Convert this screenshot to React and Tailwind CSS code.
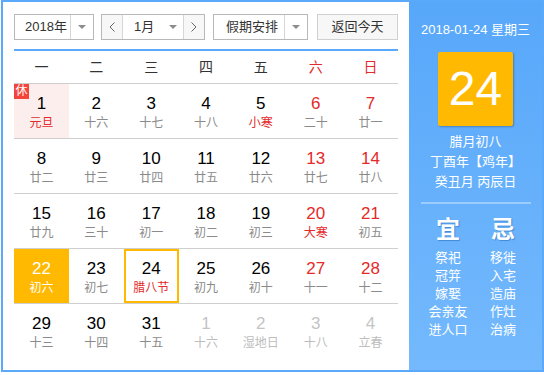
import React from "react";

const FONT = { fontFamily: '"Liberation Sans", Arial, "Noto Sans CJK SC", sans-serif' };

const rows = [
  [
    { d: "1", l: "元旦", lr: true, holiday: true, rest: true },
    { d: "2", l: "十六" },
    { d: "3", l: "十七" },
    { d: "4", l: "十八" },
    { d: "5", l: "小寒", lr: true },
    { d: "6", l: "二十", wk: true },
    { d: "7", l: "廿一", wk: true },
  ],
  [
    { d: "8", l: "廿二" },
    { d: "9", l: "廿三" },
    { d: "10", l: "廿四" },
    { d: "11", l: "廿五" },
    { d: "12", l: "廿六" },
    { d: "13", l: "廿七", wk: true },
    { d: "14", l: "廿八", wk: true },
  ],
  [
    { d: "15", l: "廿九" },
    { d: "16", l: "三十" },
    { d: "17", l: "初一" },
    { d: "18", l: "初二" },
    { d: "19", l: "初三" },
    { d: "20", l: "大寒", wk: true, lr: true },
    { d: "21", l: "初五", wk: true },
  ],
  [
    { d: "22", l: "初六", today: true },
    { d: "23", l: "初七" },
    { d: "24", l: "腊八节", lr: true, sel: true },
    { d: "25", l: "初九" },
    { d: "26", l: "初十" },
    { d: "27", l: "十一", wk: true },
    { d: "28", l: "十二", wk: true },
  ],
  [
    { d: "29", l: "十三" },
    { d: "30", l: "十四" },
    { d: "31", l: "十五" },
    { d: "1", l: "十六", other: true },
    { d: "2", l: "湿地日", other: true },
    { d: "3", l: "十八", other: true },
    { d: "4", l: "立春", other: true },
  ],
];

function Tri() {
  return (
    <svg width="8" height="4" viewBox="0 0 8 4" className="block">
      <path d="M0 0 L8 0 L4 4 Z" fill="#8c8c8c" />
    </svg>
  );
}

function Chev({ dir }) {
  return (
    <svg width="6" height="10" viewBox="0 0 6 10" className="block">
      <path
        d={dir === "l" ? "M5.5 0.5 L1 5 L5.5 9.5" : "M0.5 0.5 L5 5 L0.5 9.5"}
        fill="none"
        stroke="#666"
        strokeWidth="1"
      />
    </svg>
  );
}

function Cell({ c }) {
  let numColor = "text-black";
  let lunColor = "text-[#8a8a8a]";
  if (c.wk) numColor = "text-[#e42a2a]";
  if (c.lr) lunColor = "text-[#e42a2a]";
  if (c.other) {
    numColor = "text-[#c4c4c4]";
    lunColor = "text-[#bdbdbd]";
  }
  if (c.today) {
    numColor = "text-white";
    lunColor = "text-white";
  }
  let bg = "";
  if (c.holiday) bg = "bg-[#fdeeee]";
  if (c.today) bg = "bg-[#ffb900]";
  const sel = c.sel ? "outline-2 outline-[#ffb900] -outline-offset-2" : "";
  return (
    <div className={`relative h-[54px] flex flex-col items-center pt-[10px] ${bg} ${sel}`}>
      {c.rest && (
        <div className="absolute left-0 top-0 w-[15px] h-[15px] bg-[#f5443b] text-white text-[12px] leading-[15px] text-center">
          休
        </div>
      )}
      <div className={`text-[17px] leading-[20px] ${numColor}`}>{c.d}</div>
      <div className={`text-[12px] leading-[16px] mt-[1px] ${lunColor}`}>{c.l}</div>
    </div>
  );
}

export default function App() {
  const weekdays = ["一", "二", "三", "四", "五", "六", "日"];
  const yi = ["祭祀", "冠笄", "嫁娶", "会亲友", "进人口"];
  const ji = ["移徙", "入宅", "造庙", "作灶", "治病"];
  return (
    <div style={FONT} className="bg-white w-[544px] h-[375px]">
      <div className="ml-[1px] w-[543px] h-[372px] border-2 border-[#5aa9fa] flex">
        {/* left panel */}
        <div className="w-[406px] px-[11px] pt-[12px]">
          <div className="flex h-[26px] text-[13px] text-[#333]">
            {/* year */}
            <div className="w-[80px] flex border border-[#b8b8b8]">
              <div className="w-[55px] pl-[10px] leading-[24px]">2018年</div>
              <div className="flex-1 flex items-center justify-center border-l border-[#d6d6d6]">
                <Tri />
              </div>
            </div>
            {/* month */}
            <div className="ml-[7px] w-[104px] flex border border-[#b8b8b8]">
              <div className="w-[21px] bg-[#f7f7f7] flex items-center justify-center border-r border-[#d6d6d6]">
                <Chev dir="l" />
              </div>
              <div className="flex-1 flex items-center pl-[11px] leading-[24px]">
                <span>1月</span>
                <span className="ml-[15px]">
                  <Tri />
                </span>
              </div>
              <div className="w-[21px] bg-[#f7f7f7] flex items-center justify-center border-l border-[#d6d6d6]">
                <Chev dir="r" />
              </div>
            </div>
            {/* holiday */}
            <div className="ml-[8px] w-[95px] flex border border-[#b8b8b8]">
              <div className="w-[70px] pl-[12px] leading-[24px]">假期安排</div>
              <div className="flex-1 flex items-center justify-center border-l border-[#d6d6d6]">
                <Tri />
              </div>
            </div>
            {/* today */}
            <div className="ml-[9px] w-[81px] border border-[#d0d0d0] bg-[#f7f7f7] text-center leading-[24px]">
              返回今天
            </div>
          </div>
          <div className="mt-[9px] h-[2px] bg-[#5aa9fa]" />
          <div className="grid grid-cols-7 h-[33px] border-b border-[#cfcfcf] text-[14px] items-center text-center">
            {weekdays.map((w, i) => (
              <div key={w} className={i >= 5 ? "text-[#e42a2a]" : "text-[#333]"}>
                {w}
              </div>
            ))}
          </div>
          {rows.map((r, ri) => (
            <div
              key={ri}
              className={`grid grid-cols-7 ${ri < rows.length - 1 ? "border-b border-[#cfcfcf]" : ""}`}
            >
              {r.map((c, ci) => (
                <Cell key={ci} c={c} />
              ))}
            </div>
          ))}
        </div>
        {/* right panel */}
        <div className="flex-1 bg-gradient-to-b from-[#57a7fa] to-[#74b9fd] text-white flex flex-col items-center">
          <div className="mt-[18px] text-[13px] leading-[20px]">2018-01-24 星期三</div>
          <div className="mt-[12px] w-[75px] h-[74px] rounded-[2px] bg-[#ffb900] shadow-[1px_1px_2px_rgba(0,0,0,0.25)] flex items-center justify-center text-[48px] leading-none">
            24
          </div>
          <div className="mt-[6px] text-[13px] leading-[20px] text-center">
            <div>腊月初八</div>
            <div>丁酉年【鸡年】</div>
            <div>癸丑月 丙辰日</div>
          </div>
          <div className="mt-[10px] w-[110px] h-[2px] bg-[rgba(255,255,255,0.35)]" />
          <div className="w-[110px] grid grid-cols-2 mt-[12px]">
            <div className="flex flex-col items-center">
              <div className="text-[24px] leading-[28px] font-bold [text-shadow:1px_1px_1px_rgba(0,60,140,0.35)]">宜</div>
              <div className="mt-[5px] text-[13px] leading-[18px] text-center">
                {yi.map((t) => (
                  <div key={t}>{t}</div>
                ))}
              </div>
            </div>
            <div className="flex flex-col items-center">
              <div className="text-[24px] leading-[28px] font-bold [text-shadow:1px_1px_1px_rgba(0,60,140,0.35)]">忌</div>
              <div className="mt-[5px] text-[13px] leading-[18px] text-center">
                {ji.map((t) => (
                  <div key={t}>{t}</div>
                ))}
              </div>
            </div>
          </div>
        </div>
      </div>
    </div>
  );
}
